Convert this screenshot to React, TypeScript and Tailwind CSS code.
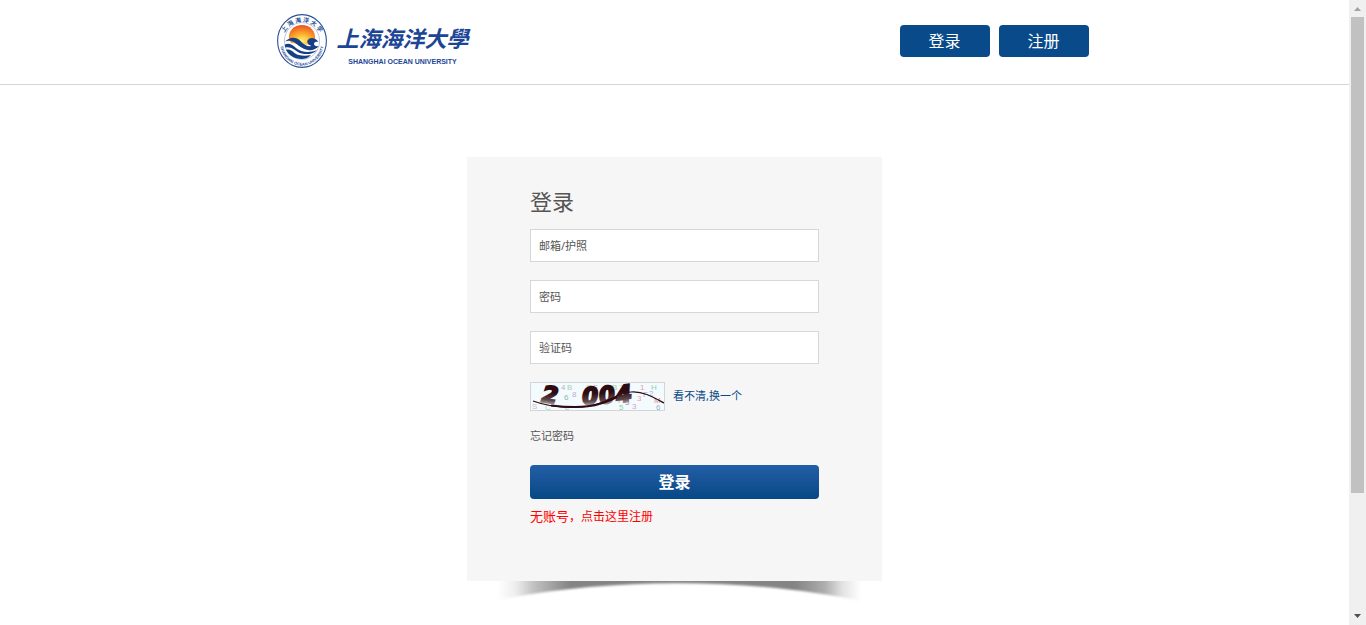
import { useState } from 'react';
import type { FormEvent } from 'react';

const FIELDS = [
  { id: 'account', label: '邮箱/护照', type: 'text' },
  { id: 'password', label: '密码', type: 'password' },
  { id: 'captcha', label: '验证码', type: 'text' },
];

// faint characters scattered behind the captcha code
const NOISE = [
  { char: '9', x: 21, y: 7, color: '#8fa6c8' },
  { char: '4', x: 30, y: 7, color: '#b9b0d0' },
  { char: 'B', x: 36, y: 7, color: '#a9cfae' },
  { char: '6', x: 33, y: 17, color: '#8fb5ae' },
  { char: '8', x: 41, y: 14, color: '#c5a5d8' },
  { char: 'S', x: 55, y: 7, color: '#a3d1a0' },
  { char: 'F', x: 62, y: 7, color: '#e3a0a0' },
  { char: 'B', x: 81, y: 7, color: '#a3d1a0' },
  { char: 'T', x: 89, y: 7, color: '#a8c3d8' },
  { char: 'P', x: 87, y: 20, color: '#c59fd0' },
  { char: '5', x: 94, y: 22, color: '#a98fb0' },
  { char: '3', x: 101, y: 26, color: '#d3a5b5' },
  { char: '5', x: 88, y: 27, color: '#9fca9b' },
  { char: '3', x: 106, y: 18, color: '#e3a0a8' },
  { char: 'F', x: 112, y: 14, color: '#b7a3d6' },
  { char: '2', x: 118, y: 13, color: '#b7a3d6' },
  { char: 'H', x: 120, y: 7, color: '#98ccbc' },
  { char: '1', x: 109, y: 7, color: '#e3a0a8' },
  { char: 'M', x: 123, y: 20, color: '#d88c8c' },
  { char: '6', x: 125, y: 27, color: '#93b4cc' },
  { char: 'C', x: 14, y: 27, color: '#a0d5bb' },
  { char: 'e', x: 34, y: 27, color: '#c5b0dc' },
  { char: 'S', x: 1, y: 26, color: '#dcb4b4' },
];

const CODE = [
  { char: '2', x: 11, y: 20, rotate: 8 },
  { char: '0', x: 51, y: 21, rotate: -4 },
  { char: '0', x: 68, y: 20, rotate: -10 },
  { char: '4', x: 85, y: 19, rotate: -8 },
];

function Emblem() {
  return (
    <svg viewBox="0 0 50 54" className="h-[54px] w-[50px]" aria-hidden="true">
      <defs>
        <radialGradient id="sun" cx="50%" cy="80%" r="75%">
          <stop offset="0" stopColor="#fff27a" />
          <stop offset="0.45" stopColor="#fcb22d" />
          <stop offset="1" stopColor="#ee5a24" />
        </radialGradient>
        <path id="ring-top" d="M5 29 A20 21 0 0 1 45 29" />
        <path id="ring-bottom" d="M3.2 29 A21.8 22.6 0 0 0 46.8 29" />
      </defs>
      <ellipse cx="25" cy="27" rx="24.4" ry="26.4" fill="#fff" stroke="#2a5199" strokeWidth="1.1" />
      <ellipse cx="25" cy="27" rx="17.6" ry="18.4" fill="#fff" stroke="#9db1d4" strokeWidth="0.7" />
      <path d="M12 25 C11 17 17 11 25 11 C33 11 39 17 38 26 L34 31 L14 29 Z" fill="url(#sun)" />
      <path
        d="M8 27.5 C13 22.5 19 22.5 23.5 27 C27 31 31 33 34.5 32 C30 30.5 29 27 32 24.8 C35 22.8 39 24.5 41.5 28 C40 27.4 37.5 27.5 37 29.5 C36.8 31.5 39 32.8 41.8 32 C39.5 35 35 36.8 31 36 C25 35 21 31 17.5 28.5 C14.5 26.6 11 26.4 8 27.5 Z"
        fill="#163f87"
      />
      <path
        d="M7.8 30.5 C12.5 28.6 15.5 31 19 34 C24 38 32 39.5 40 36 C37 39.5 32 40.5 27 40 C21 39.3 18 35.5 14.5 34 C12 33 9.5 33 8.2 33.5 Z"
        fill="#163f87"
      />
      <path
        d="M9 36 C12 34.8 14.5 36.5 17.5 39 C21 41.6 27 42.4 34 41 C31 44 28 45 24.5 45 C17 44.8 11.5 41 9 36 Z"
        fill="#163f87"
      />
      <text fill="#2a5199" className="font-['Noto_Sans_CJK_SC',sans-serif] text-[6px] font-bold">
        <textPath href="#ring-top" startOffset="50%" textAnchor="middle">上 海 海 洋 大 学</textPath>
      </text>
      <text fill="#2a5199" className="font-['Liberation_Sans',sans-serif] text-[4px] font-bold">
        <textPath href="#ring-bottom" startOffset="50%" textAnchor="middle">SHANGHAI OCEAN UNIVERSITY</textPath>
      </text>
    </svg>
  );
}

function Logo() {
  return (
    <a href="#" className="flex items-start gap-2.5 text-[#1c4596]">
      <Emblem />
      <span className="flex flex-col items-center pt-2">
        <span className="text-[22px] leading-8 font-bold italic">上海海洋大學</span>
        <span className="mt-1 font-['Liberation_Sans',sans-serif] text-[7px] leading-2 font-bold whitespace-nowrap">
          SHANGHAI OCEAN UNIVERSITY
        </span>
      </span>
    </a>
  );
}

function Captcha() {
  return (
    <svg viewBox="0 0 133 27" className="h-[29px] w-[135px] border border-[#d3d6d8] bg-[#f3fbfe]" role="img" aria-label="验证码">
      <defs>
        <linearGradient id="ink" x1="0" y1="0" x2="0" y2="1">
          <stop offset="0.4" stopColor="#2c0c12" />
          <stop offset="0.7" stopColor="#5d4649" />
          <stop offset="0.85" stopColor="#a89da0" />
        </linearGradient>
      </defs>
      <g className="font-['Liberation_Sans',sans-serif] text-[8px]">
        {NOISE.map((item, index) => (
          <text key={index} x={item.x} y={item.y} fill={item.color}>{item.char}</text>
        ))}
      </g>
      <g className="font-['DejaVu_Sans',sans-serif] text-[23px] font-bold italic" fill="url(#ink)" stroke="url(#ink)" strokeWidth="2">
        {CODE.map((item, index) => (
          <text key={index} x={item.x} y={item.y} transform={`rotate(${item.rotate} ${item.x + 8} 12)`}>{item.char}</text>
        ))}
      </g>
      <path d="M2 18 C18 24 36 25 52 24 C76 22 84 10 100 9 C112 8 122 14 133 20" fill="none" stroke="#2c0c12" strokeWidth="1.2" />
      <path d="M20 22.5 C50 26 66 24 86 14" fill="none" stroke="#2c0c12" strokeWidth="2" />
    </svg>
  );
}

function CardShadow() {
  return (
    <svg viewBox="0 0 415 28" preserveAspectRatio="none" className="h-7 w-full" aria-hidden="true">
      <defs>
        <linearGradient id="fade" x1="30" y1="0" x2="394" y2="0" gradientUnits="userSpaceOnUse">
          <stop offset="0" stopColor="#777" stopOpacity="0" />
          <stop offset="0.05" stopColor="#777" stopOpacity="0.12" />
          <stop offset="0.1" stopColor="#777" stopOpacity="0.45" />
          <stop offset="0.2" stopColor="#777" stopOpacity="0.9" />
          <stop offset="0.82" stopColor="#777" stopOpacity="0.9" />
          <stop offset="0.9" stopColor="#777" stopOpacity="0.6" />
          <stop offset="0.95" stopColor="#777" stopOpacity="0.2" />
          <stop offset="1" stopColor="#777" stopOpacity="0" />
        </linearGradient>
        <filter id="soften" x="-5%" y="-50%" width="110%" height="200%">
          <feGaussianBlur stdDeviation="1" />
        </filter>
      </defs>
      <path d="M20 -8 H400 V21 C280 -4 140 -4 20 21 Z" fill="url(#fade)" filter="url(#soften)" />
    </svg>
  );
}

function ScrollTrack() {
  return (
    <div className="flex w-[17px] shrink-0 flex-col items-center bg-[#f0f0f0]" aria-hidden="true">
      <svg viewBox="0 0 17 17" className="h-[17px] w-[17px] shrink-0">
        <path d="M5 11 L8.5 7 L12 11 Z" fill="#a3a3a3" />
      </svg>
      <div className="flex w-full flex-1 flex-col items-center">
        <div className="h-[80.5%] w-[13px] bg-[#c1c1c1]" />
      </div>
      <svg viewBox="0 0 17 17" className="h-[17px] w-[17px] shrink-0">
        <path d="M5 6 L8.5 10 L12 6 Z" fill="#505050" />
      </svg>
    </div>
  );
}

function LoginCard() {
  const [values, setValues] = useState<Record<string, string>>({});

  const handleSubmit = (e: FormEvent) => {
    e.preventDefault();
  };

  return (
    <form onSubmit={handleSubmit} className="bg-[#f6f6f6] px-[63px] pt-7 pb-14 text-[11px] text-[#555]">
      <h1 className="text-[22px] leading-8">登录</h1>
      <div className="mt-3 flex flex-col gap-[18px]">
        {FIELDS.map(field => (
          <input
            key={field.id}
            id={field.id}
            type={field.type}
            aria-label={field.label}
            placeholder={field.label}
            value={values[field.id] || ''}
            onChange={e => setValues({ ...values, [field.id]: e.target.value })}
            className="h-[33px] w-full border border-[#d5d8d9] bg-white px-2 outline-none placeholder:text-[#555]"
          />
        ))}
        <div className="flex items-center gap-2">
          <Captcha />
          <a href="#" className="text-[#084a8a]">看不清,换一个</a>
        </div>
      </div>
      <a href="#" className="mt-4 block leading-[18px]">忘记密码</a>
      <button
        type="submit"
        className="mt-5 block h-[34px] w-full rounded bg-linear-to-b from-[#225ea6] to-[#064886] text-base font-bold text-white"
      >
        登录
      </button>
      <p className="mt-2 text-[13px] leading-[18px] text-[#f00]">
        无账号<span className="text-xs">，</span>
        <a href="#" className="text-xs">点击这里注册</a>
      </p>
    </form>
  );
}

export default function App() {
  return (
    <div className="flex min-h-screen bg-white font-['Noto_Sans','Noto_Sans_CJK_SC',sans-serif]">
      <div className="min-w-0 flex-1">
        <header className="border-b border-[#d5d5d5]">
          <div className="mx-auto flex h-[84px] max-w-[830px] items-center justify-between pr-px pb-0.5 pl-[17px]">
            <Logo />
            <nav className="flex gap-[9px] text-base text-white">
              <button type="button" className="h-8 w-[90px] rounded bg-[#084a8a]">登录</button>
              <button type="button" className="h-8 w-[90px] rounded bg-[#084a8a]">注册</button>
            </nav>
          </div>
        </header>
        <main className="mx-auto max-w-[415px] pt-[72px]">
          <LoginCard />
          <CardShadow />
        </main>
      </div>
      <ScrollTrack />
    </div>
  );
}
